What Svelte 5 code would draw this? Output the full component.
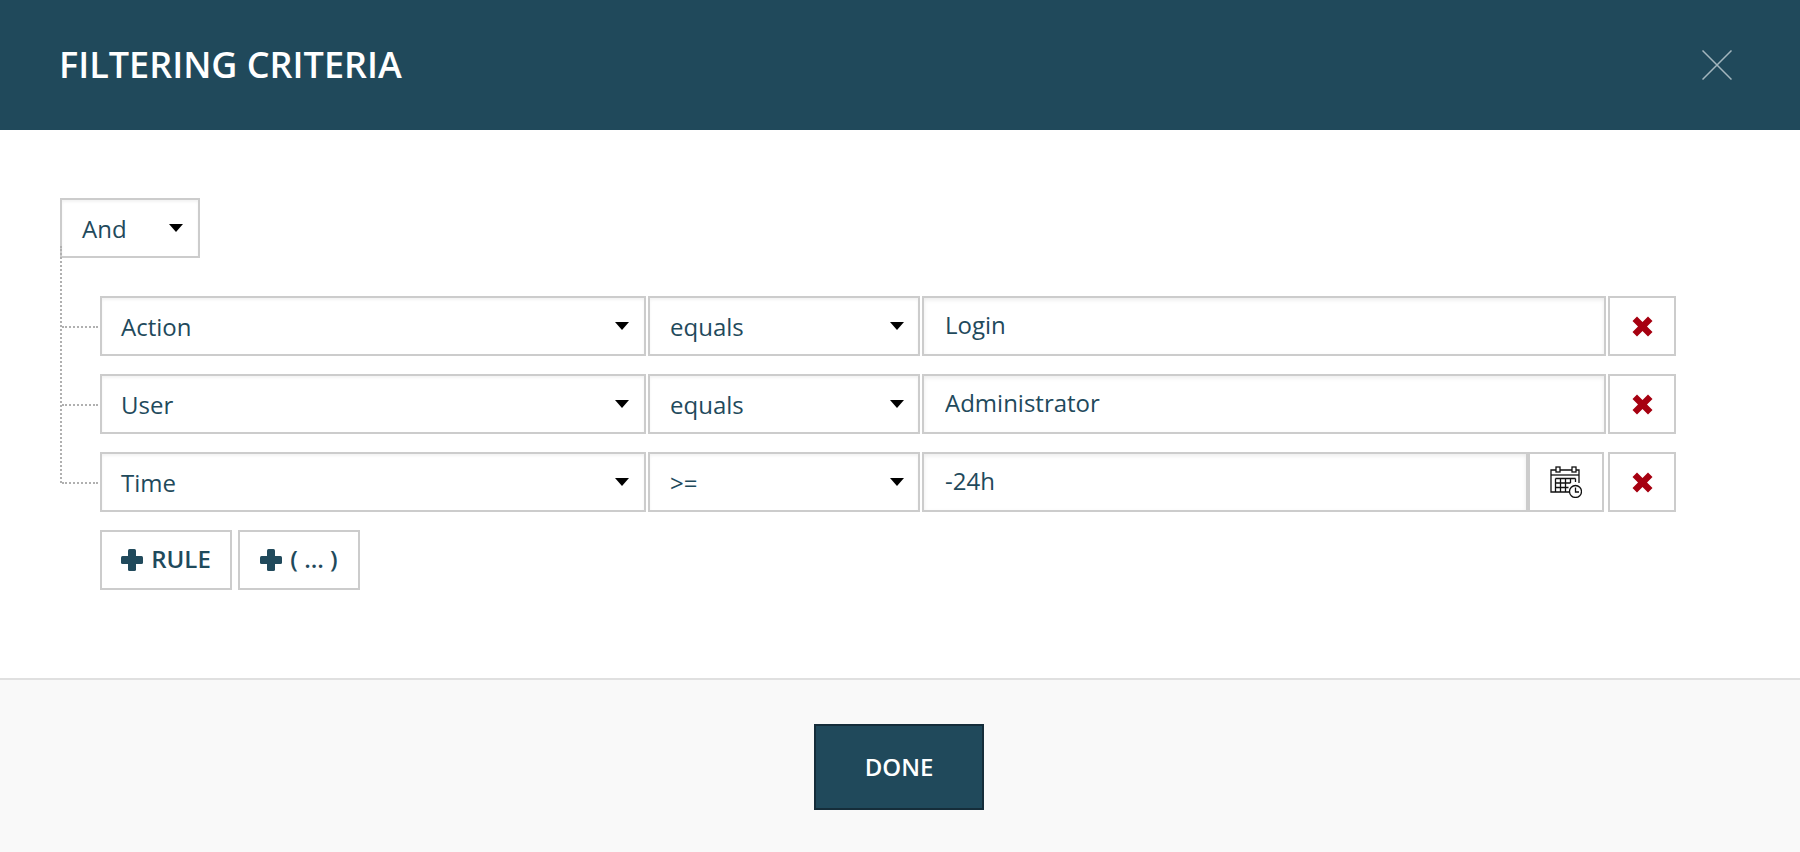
<script lang="ts">
	type Rule = { field: string; op: string; value: string; date?: boolean };

	let rules: Rule[] = $state([
		{ field: 'Action', op: 'equals', value: 'Login' },
		{ field: 'User', op: 'equals', value: 'Administrator' },
		{ field: 'Time', op: '>=', value: '-24h', date: true }
	]);
</script>

{#snippet caret()}
	<svg class="caret" width="16" height="10" viewBox="0 0 16 10"><path d="M1 1h14L8 9z" fill="#000" /></svg>
{/snippet}

{#snippet plus()}
	<svg class="plus" width="22" height="22" viewBox="0 0 22 22" fill="#214a5c">
		<rect x="0" y="7" width="22" height="8" rx="1.500" />
		<rect x="7" y="0" width="8" height="22" rx="1.500" />
	</svg>
{/snippet}

<div class="modal">
	<header>
		<h1>FILTERING CRITERIA</h1>
		<button class="close" aria-label="Close">
			<svg width="30" height="30" viewBox="0 0 30 30">
				<path d="M0.500 0.500l29 29M29.500 0.500l-29 29" stroke="#a3b6be" stroke-width="1.500" fill="none" />
			</svg>
		</button>
	</header>

	<main>
		<div class="select and">
			<span>And</span>
			{@render caret()}
		</div>

		<div class="tree">
			{#each rules as rule}
				<div class="row">
					<div class="select field">
						<span>{rule.field}</span>
						{@render caret()}
					</div>
					<div class="select op">
						<span>{rule.op}</span>
						{@render caret()}
					</div>
					<input type="text" class:short={rule.date} value={rule.value} />
					{#if rule.date}
						<button class="cal" aria-label="Pick date">
							<svg width="32" height="32" viewBox="0 0 32 32" fill="none" stroke="#111" stroke-width="1.300">
								<path d="M22 26H1V4h5M10 4h12M26 4h3v13" />
								<rect x="6" y="1" width="4" height="5" fill="#fff" />
								<rect x="22" y="1" width="4" height="5" fill="#fff" />
								<path d="M1 9h28" />
								<path d="M5.500 12.500h20M5.500 17h15M5.500 21.500h13M5.500 26v-13.500M10.500 26v-13.500M15.500 26v-13.500M20.500 17v-4.500M25.500 16v-3.500" />
								<circle cx="25.500" cy="25.500" r="6" fill="#fff" />
								<path d="M25.500 21.500v4.500h3.500" />
							</svg>
						</button>
					{/if}
					<button class="remove" aria-label="Remove">
						<svg width="21" height="21" viewBox="0 0 21 21">
							<path d="M0.500 5L5 0.500 10.500 6 16 0.500 20.500 5 15 10.500 20.500 16 16 20.500 10.500 15 5 20.500 0.500 16 6 10.500z" fill="#a60010" />
						</svg>
					</button>
				</div>
			{/each}
		</div>

		<div class="actions">
			<button class="add rule">{@render plus()}RULE</button>
			<button class="add group">{@render plus()}( ... )</button>
		</div>
	</main>

	<footer>
		<button class="done">DONE</button>
	</footer>
</div>

<style>
	:global(body) {
		margin: 0;
		font-family: 'Open Sans', sans-serif;
		color: #1f4a5c;
		background: #fff;
	}

	.modal {
		height: 852px;
		display: flex;
		flex-direction: column;
	}

	header {
		height: 130px;
		flex: none;
		background: #20495b;
		display: flex;
		align-items: center;
		justify-content: space-between;
		padding: 0 68px 0 59px;
	}

	h1 {
		margin: 0 0 2px;
		color: #fff;
		font-size: 36px;
		font-weight: 600;
	}

	button {
		font-family: inherit;
		color: inherit;
		background: #fff;
		border: 2px solid #ccc;
		padding: 0;
		box-sizing: border-box;
		display: flex;
		align-items: center;
		justify-content: center;
	}

	.close {
		background: none;
		border: none;
		width: 30px;
		height: 30px;
	}

	main {
		flex: 1;
		padding: 68px 60px 0;
	}

	.select {
		height: 60px;
		box-sizing: border-box;
		border: 2px solid #ccc;
		display: flex;
		align-items: center;
		justify-content: space-between;
		padding: 0 14px 0 20px;
		font-size: 24px;
		box-shadow: inset 0 2px 3px rgba(0, 0, 0, 0.05);
	}

	.caret {
		margin-top: 0;
	}

	.and {
		width: 140px;
		padding-right: 14px;
	}

	.tree {
		margin-top: 38px;
		display: flex;
		flex-direction: column;
		gap: 18px;
		padding-left: 40px;
		position: relative;
	}

	/* vertical connector, starts under the And select */
	.tree::before {
		content: '';
		position: absolute;
		left: 0;
		top: -50px;
		bottom: 29px;
		border-left: 2px dotted #b0b0b0;
	}

	.row {
		display: flex;
		height: 60px;
		position: relative;
	}

	.row::before {
		content: '';
		position: absolute;
		left: -38px;
		top: 30px;
		width: 36px;
		border-top: 2px dotted #b0b0b0;
	}

	.field {
		width: 546px;
		padding-left: 19px;
	}

	.op {
		width: 272px;
		margin-left: 2px;
		padding-right: 13px;
	}

	input {
		width: 684px;
		height: 60px;
		margin-left: 2px;
		box-sizing: border-box;
		border: 2px solid #ccc;
		padding: 0 20px 4px 21px;
		font: 24px 'Open Sans', sans-serif;
		color: inherit;
		outline: none;
		box-shadow: inset 0 2px 4px rgba(0, 0, 0, 0.08);
	}

	input.short {
		width: 606px;
	}

	.cal {
		width: 77px;
		height: 60px;
		margin-left: -1px;
		border-left-width: 3px;
	}

	.remove {
		width: 68px;
		height: 60px;
		margin-left: 2px;
	}

	.cal + .remove {
		margin-left: 4px;
	}

	.actions {
		display: flex;
		gap: 6px;
		margin: 18px 0 0 40px;
	}

	.add {
		height: 60px;
		font-size: 24px;
		font-weight: 600;
		gap: 8px;
		padding-bottom: 3px;
	}

	.rule {
		width: 132px;
	}

	.group {
		width: 122px;
	}

	.plus {
		margin-top: 3px;
	}

	footer {
		height: 174px;
		flex: none;
		box-sizing: border-box;
		background: #f9f9f9;
		border-top: 2px solid #e0e0e0;
		display: flex;
		justify-content: center;
		padding-top: 44px;
	}

	.done {
		width: 170px;
		height: 86px;
		padding-bottom: 1px;
		background: #20495b;
		border-color: #152d3a;
		color: #fff;
		font-size: 24px;
		font-weight: 600;
		margin-left: -2px;
	}
</style>
